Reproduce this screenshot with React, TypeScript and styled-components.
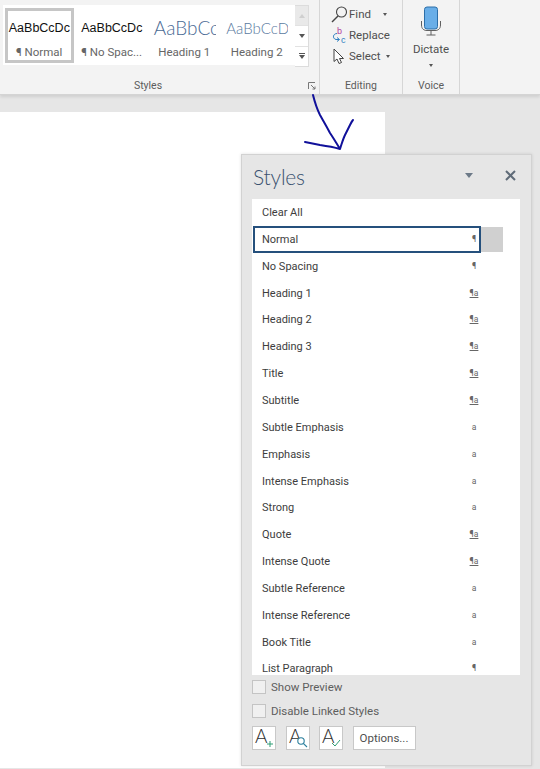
import React from "react"
import styled, { createGlobalStyle } from "styled-components"

const Global = createGlobalStyle`
    html, body { margin: 0; padding: 0; }
    body { background: #e6e6e6; font-family: Roboto, "Open Sans", sans-serif; overflow: hidden; }
`

const Page = styled.div`
    position: relative;
    width: 540px;
    height: 769px;
    overflow: hidden;
    background: #e6e6e6;
`

/* ribbon */
const Ribbon = styled.div`
    display: flex;
    height: 95px;
    background: #f3f3f3;
    border-bottom: 1px solid #d4d4d4;
    box-shadow: 0 2px 3px rgba(0, 0, 0, 0.1);
    box-sizing: border-box;
`

const Group = styled.div<{ $w: number }>`
    position: relative;
    width: ${(p) => p.$w}px;
    flex: none;
    display: flex;
    flex-direction: column;
    box-sizing: border-box;
    border-right: 1px solid #d6d6d6;
`

const GroupBody = styled.div`
    flex: 1;
    min-height: 0;
`

const GroupLabel = styled.div<{ $pad?: number }>`
    height: 16px;
    line-height: 16px;
    padding-right: ${(p) => p.$pad ?? 0}px;
    text-align: center;
    font-size: 10.5px;
    color: #5c5c5c;
`

const GalleryRow = styled.div`
    display: flex;
    margin: 5px 0 0 3px;
`

const Gallery = styled.div`
    display: flex;
    width: 292px;
    height: 60px;
    background: #fff;
`

const Tile = styled.div<{ $active?: boolean }>`
    width: 69px;
    height: 55px;
    margin: 3px 1.75px 0;
    flex: none;
    box-sizing: border-box;
    overflow: hidden;
    border: 3px solid ${(p) => (p.$active ? "#c6c6c6" : "transparent")};
    text-align: center;
    white-space: nowrap;
`

const Sample = styled.div<{ $size: number; $color: string; $light?: boolean }>`
    height: 32px;
    line-height: 34px;
    font-size: ${(p) => p.$size}px;
    font-weight: ${(p) => (p.$light ? 300 : 400)};
    color: ${(p) => p.$color};
    font-family: ${(p) => (p.$light ? "Lato, sans-serif" : '"Liberation Sans", sans-serif')};
    overflow: hidden;
    text-align: left;
    padding-left: 1px;
`

const SampleName = styled.div`
    font-size: 11.5px;
    line-height: 18px;
    color: #666;
`

const ScrollCol = styled.div`
    display: flex;
    flex-direction: column;
    width: 14px;
    height: 62px;
    border: 1px solid #dcdcdc;
    border-left: none;
    background: #fff;
    box-sizing: border-box;
`

const ScrollBtn = styled.div<{ $muted?: boolean }>`
    flex: 1;
    display: flex;
    align-items: center;
    justify-content: center;
    background: ${(p) => (p.$muted ? "#e9e9e9" : "#fff")};
    color: ${(p) => (p.$muted ? "#cfcfcf" : "#555")};
    border-bottom: 1px solid #e2e2e2;
    &:last-child { border-bottom: none; }
`

const Launcher = styled.svg`
    position: absolute;
    right: 3px;
    bottom: 4px;
`

const EditList = styled.div`
    display: flex;
    flex-direction: column;
    gap: 3px;
    padding: 5px 0 0 11px;
`

const EditRow = styled.div`
    display: flex;
    align-items: center;
    height: 18px;
    gap: 1px;
    font-size: 11.5px;
    color: #505050;
`

const Caret = styled.span<{ $gap?: number; $top?: number }>`
    display: inline-block;
    margin-left: ${(p) => p.$gap ?? 4}px;
    margin-top: ${(p) => p.$top ?? 0}px;
    border-left: 2.5px solid transparent;
    border-right: 2.5px solid transparent;
    border-top: 3px solid #555;
`

const VoiceBody = styled.div`
    display: flex;
    flex-direction: column;
    align-items: center;
    padding-top: 6px;
    font-size: 11.5px;
    color: #505050;
    line-height: 16px;
`

const VoiceLabel = styled.div`
    margin-top: 5px;
`

/* document */
const Doc = styled.div`
    width: 385px;
    height: 656px;
    margin-top: 17px;
    background: #fff;
`

const Arrow = styled.svg`
    position: absolute;
    left: 300px;
    top: 90px;
`

/* styles pane */
const Pane = styled.aside`
    position: absolute;
    left: 241px;
    top: 154px;
    width: 291px;
    height: 612px;
    box-sizing: border-box;
    background: #e6e6e6;
    border: 1px solid #d2d2d2;
    box-shadow: 0 0 3px rgba(0, 0, 0, 0.12);
    padding: 0 10px;
`

const PaneHead = styled.div`
    display: flex;
    align-items: center;
    height: 40px;
    margin-bottom: 4px;
    color: #3a5270;
`

const PaneTitle = styled.h2`
    flex: 1;
    margin: 3px 0 0 1px;
    font-family: Lato, sans-serif;
    font-size: 21px;
    font-weight: 300;
    letter-spacing: -0.2px;
`

const HeadCaret = styled.span`
    margin-right: 32px;
    border-left: 4.5px solid transparent;
    border-right: 4.5px solid transparent;
    border-top: 5px solid #6d7a88;
`

const CloseX = styled.svg`
    margin-right: 5px;
`

const List = styled.div`
    width: 268px;
    height: 476px;
    padding-top: 0.2px;
    background: #fff;
    overflow: hidden;
    box-sizing: border-box;
`

const Row = styled.div<{ $selected?: boolean }>`
    position: relative;
    display: flex;
    align-items: center;
    justify-content: space-between;
    height: 26.85px;
    box-sizing: border-box;
    width: 228px;
    margin-left: 1px;
    padding: 0 1px 0 9px;
    font-size: 11px;
    color: #3d3d3d;
    outline: ${(p) => (p.$selected ? "2px solid #25507c" : "none")};
    outline-offset: -2px;
    white-space: nowrap;
`

const RowScroll = styled.span`
    position: absolute;
    left: 228px;
    top: 1px;
    width: 22px;
    height: 25px;
    background: #d0d0d0;
`

const Mark = styled.span<{ $linked?: boolean }>`
    width: 12px;
    text-align: center;
    font-size: 8.5px;
    line-height: 9px;
    color: #666;
    text-decoration: ${(p) => (p.$linked ? "underline" : "none")};
`

const CheckRow = styled.label`
    display: flex;
    align-items: center;
    gap: 5px;
    height: 24px;
    font-size: 11.5px;
    color: #5e5e5e;
`

const Box = styled.span`
    width: 12px;
    height: 12px;
    background: #f0f0f0;
    border: 1px solid #c4c4c4;
`

const Checks = styled.div`
    display: flex;
    flex-direction: column;
`

const Actions = styled.div`
    display: flex;
    align-items: center;
    gap: 9.5px;
    margin-top: 3px;
`

const IconBtn = styled.button`
    width: 24px;
    height: 24px;
    padding: 0;
    display: flex;
    align-items: center;
    justify-content: center;
    background: #fff;
    border: 1px solid #c8c8c8;
`

const Options = styled.button`
    width: 63px;
    height: 24px;
    padding: 0;
    background: #fff;
    border: 1px solid #c8c8c8;
    font-family: inherit;
    font-size: 11.5px;
    color: #505050;
`

const styleRows: [string, "p" | "l" | "c", boolean?][] = [
    ["Clear All", "c"],
    ["Normal", "p", true],
    ["No Spacing", "p"],
    ["Heading 1", "l"],
    ["Heading 2", "l"],
    ["Heading 3", "l"],
    ["Title", "l"],
    ["Subtitle", "l"],
    ["Subtle Emphasis", "c"],
    ["Emphasis", "c"],
    ["Intense Emphasis", "c"],
    ["Strong", "c"],
    ["Quote", "l"],
    ["Intense Quote", "l"],
    ["Subtle Reference", "c"],
    ["Intense Reference", "c"],
    ["Book Title", "c"],
    ["List Paragraph", "p"],
]

const tiles = [
    { sample: "AaBbCcDc", name: "¶ Normal", size: 12.5, color: "#111", active: true },
    { sample: "AaBbCcDc", name: "¶ No Spac...", size: 12.5, color: "#111" },
    { sample: "AaBbCcDc", name: "Heading 1", size: 19, color: "#4a6a94", light: true },
    { sample: "AaBbCcDc", name: "Heading 2", size: 15, color: "#5a7aa0", light: true },
]

function markFor(kind: string, name: string) {
    if (name === "Clear All") return null
    if (kind === "p") return <Mark>¶</Mark>
    if (kind === "l") return <Mark $linked>¶a</Mark>
    return <Mark>a</Mark>
}

const LetterA = () => (
    <text x="1" y="15" fontFamily="Lato, sans-serif" fontWeight="300" fontSize="19" fill="#303030">A</text>
)

export default function App() {
    return (
        <Page>
            <Global />
            <Ribbon>
                <Group $w={320}>
                    <GroupBody>
                        <GalleryRow>
                            <Gallery>
                                {tiles.map((t) => (
                                    <Tile key={t.name} $active={t.active}>
                                        <Sample $size={t.size} $color={t.color} $light={t.light}>{t.sample}</Sample>
                                        <SampleName>{t.name}</SampleName>
                                    </Tile>
                                ))}
                            </Gallery>
                            <ScrollCol>
                                <ScrollBtn $muted><svg width="6" height="4"><path d="M0 4L3 0L6 4Z" fill="currentColor" /></svg></ScrollBtn>
                                <ScrollBtn><svg width="6" height="4"><path d="M0 0L3 4L6 0Z" fill="currentColor" /></svg></ScrollBtn>
                                <ScrollBtn><svg width="6" height="6"><path d="M0 0H6V1H0ZM0 2L3 6L6 2Z" fill="currentColor" /></svg></ScrollBtn>
                            </ScrollCol>
                        </GalleryRow>
                    </GroupBody>
                    <GroupLabel $pad={23}>Styles</GroupLabel>
                    <Launcher width="8" height="8" viewBox="0 0 8 8">
                        <path d="M0.5 7V0.5H7M3 3L7 7M7 4.5V7H4.5" fill="none" stroke="#777" strokeWidth="1" />
                    </Launcher>
                </Group>
                <Group $w={83}>
                    <GroupBody>
                        <EditList>
                            <EditRow>
                                <svg width="17" height="17" viewBox="0 0 17 17">
                                    <circle cx="10.5" cy="6" r="5" fill="none" stroke="#444" strokeWidth="1.1" />
                                    <path d="M7 10L1 16" stroke="#444" strokeWidth="1.4" />
                                </svg>
                                Find<Caret $gap={11} />
                            </EditRow>
                            <EditRow>
                                <svg width="17" height="17" viewBox="0 0 17 17">
                                    <text x="6" y="7" fontSize="9" fill="#b2409a" fontFamily="Liberation Sans, sans-serif">b</text>
                                    <text x="10" y="16" fontSize="9" fill="#2d7fc1" fontFamily="Liberation Sans, sans-serif">c</text>
                                    <path d="M6 6.5C2 6.5 1 11.5 5 12.5H8M6 10.5L8.5 12.5L6 14.5" fill="none" stroke="#2d7fc1" strokeWidth="1" />
                                </svg>
                                Replace
                            </EditRow>
                            <EditRow>
                                <svg width="17" height="17" viewBox="0 0 17 17">
                                    <path d="M3 1V13.5L6 11L8 15.5L10.5 14.5L8.5 10.5H12.5Z" fill="#fff" stroke="#444" strokeWidth="1" />
                                </svg>
                                Select<Caret />
                            </EditRow>
                        </EditList>
                    </GroupBody>
                    <GroupLabel>Editing</GroupLabel>
                </Group>
                <Group $w={57}>
                    <GroupBody>
                        <VoiceBody>
                            <svg width="22" height="30" viewBox="0 0 22 30">
                                <rect x="4.5" y="1" width="13" height="22" rx="2.5" fill="#69aee8" stroke="#2c6ea8" strokeWidth="1" />
                                <path d="M1.5 15V19C1.5 23 4 24.5 7 24.5H15C18 24.5 20.5 23 20.5 19V15M11 25V29M6.5 29H15.5" fill="none" stroke="#606060" strokeWidth="1" />
                            </svg>
                            <VoiceLabel>Dictate</VoiceLabel>
                            <Caret $gap={0} $top={7} />
                        </VoiceBody>
                    </GroupBody>
                    <GroupLabel>Voice</GroupLabel>
                </Group>
            </Ribbon>
            <Doc />
            <Arrow width="60" height="65" viewBox="0 0 60 65">
                <path d="M13 5C15 13 17 19 20 25C24 32 27 37 30 43C34 49 37 54 40 59C42 53 43 49 45 45C47 41 49 37 50 35C51 33 52 31 53 30M5 52C10 53 15 54 20 55C27 56 33 57 40 59" fill="none" stroke="#10109a" strokeWidth="2" strokeLinecap="round" strokeLinejoin="round" />
            </Arrow>
            <Pane>
                <PaneHead>
                    <PaneTitle>Styles</PaneTitle>
                    <HeadCaret />
                    <CloseX width="11" height="11" viewBox="0 0 11 11">
                        <path d="M1 1L10 10M10 1L1 10" stroke="#5f6b78" strokeWidth="2" />
                    </CloseX>
                </PaneHead>
                <List>
                    {styleRows.map(([name, kind, selected]) => (
                        <Row key={name} $selected={selected}>
                            {name}
                            {markFor(kind, name)}
                            {selected && <RowScroll />}
                        </Row>
                    ))}
                </List>
                <Checks>
                    <CheckRow><Box />Show Preview</CheckRow>
                    <CheckRow><Box />Disable Linked Styles</CheckRow>
                </Checks>
                <Actions>
                    <IconBtn>
                        <svg width="20" height="20" viewBox="0 0 20 20">
                            <LetterA />
                            <path d="M13 16H19M16 13V19" stroke="#2f9d74" strokeWidth="1" />
                        </svg>
                    </IconBtn>
                    <IconBtn>
                        <svg width="20" height="20" viewBox="0 0 20 20">
                            <LetterA />
                            <circle cx="13" cy="13" r="3.2" fill="#fff" stroke="#2b7f9d" strokeWidth="1.1" />
                            <path d="M15.3 15.3L19 19" stroke="#2b7f9d" strokeWidth="1.1" />
                        </svg>
                    </IconBtn>
                    <IconBtn>
                        <svg width="20" height="20" viewBox="0 0 20 20">
                            <LetterA />
                            <path d="M11 15L14 18L19 12" fill="none" stroke="#2f9d74" strokeWidth="1" />
                        </svg>
                    </IconBtn>
                    <Options>Options...</Options>
                </Actions>
            </Pane>
        </Page>
    )
}
